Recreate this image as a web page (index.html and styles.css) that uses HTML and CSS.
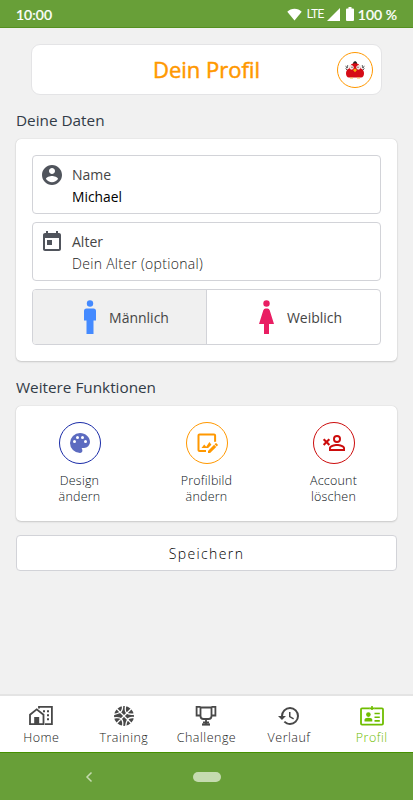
FILE: index.html
```
<!DOCTYPE html>
<html lang="de">
<head>
<meta charset="utf-8">
<meta name="viewport" content="width=device-width, initial-scale=1">
<title>Dein Profil</title>
<link rel="stylesheet" href="styles.css">
</head>

<body>
	<div class="statusbar">
		<span class="time">10:00</span>
		<div class="status">
			<svg class="wifi" width="15" height="13" viewBox="0 0 16 13"><path d="M8 13L.3 3.600C2.400 1.500 5 .4 8 .4s5.600 1.100 7.700 3.200z"/></svg>
			<span class="lte">LTE</span>
			<svg class="signal" width="13" height="13" viewBox="0 0 13 13"><path d="M13 0v13H0z"/></svg>
			<svg class="battery" width="8" height="14" viewBox="0 0 8 14"><path d="M2.500 0h3v1.500H7a1 1 0 0 1 1 1V13a1 1 0 0 1-1 1H1a1 1 0 0 1-1-1V2.500a1 1 0 0 1 1-1h1.500z"/></svg>
			<span class="percent">100 %</span>
		</div>
	</div>

	<main>
		<header class="header">
			<h1>Dein Profil</h1>
			<a class="avatar" href="#">
				<svg width="20" height="20" viewBox="0 0 20 20">
					<path d="M7.800 4L8.500 2l1.700-.9L11.800 2.200l.4 1.800z" fill="#222"/>
					<path d="M1.800 8.300L.8 5.800M2.500 8L2.700 5M17.500 8l-.2-3M18.200 8.300l1-2.500" stroke="#444" stroke-width=".8"/>
					<path d="M.8 8.500l2 2.200M19.200 8.500l-2 2.200" stroke="#333" stroke-width="1"/>
					<path d="M6.300 4.300Q10 2 13.700 4.300L16 8.500q3 1.500 3 4.800 0 4-3 4.300H4q-3-.3-3-4.300 0-3.300 3-4.800z" fill="#d50b16"/>
					<path d="M4.200 5.700q2.800-2 4.700 1.200-.2 2.600-2.300 2.800-2.700-.6-2.400-4zM15.800 5.700q-2.800-2-4.700 1.200.2 2.600 2.300 2.800 2.700-.6 2.400-4z" fill="#f4e8e4"/>
					<path d="M6.500 6.700h1v1h-1zM12.500 6.700h1v1h-1z" fill="#222"/>
					<path d="M8 10l2-1.400 2 1.400-2 2.200z" fill="#f6a80c"/>
					<path d="M5 17.600h3v1H5zM12 17.600h3v1h-3z" fill="#f6b64a"/>
				</svg>
			</a>
		</header>

		<h2>Deine Daten</h2>
		<div class="card daten">
			<div class="field">
				<svg width="24" height="24" viewBox="0 0 24 24"><path d="M12 2C6.480 2 2 6.480 2 12s4.480 10 10 10 10-4.480 10-10S17.520 2 12 2zm0 3c1.660 0 3 1.340 3 3s-1.340 3-3 3-3-1.340-3-3 1.340-3 3-3zm0 14.200c-2.500 0-4.710-1.280-6-3.220.03-1.990 4-3.080 6-3.080 1.990 0 5.970 1.090 6 3.080-1.290 1.940-3.500 3.220-6 3.220z"/></svg>
				<div>
					<label>Name</label>
					<p class="value">Michael</p>
				</div>
			</div>
			<div class="field">
				<svg width="24" height="24" viewBox="0 0 24 24"><path d="M19 3h-1V1h-2v2H8V1H6v2H5c-1.110 0-1.990.9-1.990 2L3 19c0 1.100.89 2 2 2h14c1.100 0 2-.9 2-2V5c0-1.100-.9-2-2-2zm0 16H5V8h14v11zM7 10h5v5H7z"/></svg>
				<div>
					<label>Alter</label>
					<p class="value leer">Dein Alter (optional)</p>
				</div>
			</div>
			<div class="geschlecht">
				<div class="option aktiv">
					<svg class="mann" width="12" height="34" viewBox="0 0 12 34"><circle cx="6" cy="3.500" r="3.200"/><path d="M2.500 8.500h7A2.500 2.500 0 0 1 12 11v9.500H9.500V34h-7V20.500H0V11a2.500 2.500 0 0 1 2.500-2.500z"/></svg>
					<span>Männlich</span>
				</div>
				<div class="option">
					<svg class="frau" width="15" height="34" viewBox="0 0 15 34"><circle cx="7.500" cy="3.500" r="3.200"/><path d="M6.500 8.500h2q1.500 0 2.200 1.700L15 24h-5v10H5V24H0l4.300-13.800Q5 8.500 6.500 8.500z"/></svg>
					<span>Weiblich</span>
				</div>
			</div>
		</div>

		<h2>Weitere Funktionen</h2>
		<div class="card funktionen">
			<a class="funktion" href="#">
				<span class="kreis blau"><svg width="24" height="24" viewBox="0 0 24 24"><path d="M12 22A10 10 0 0 1 2 12 10 10 0 0 1 12 2c5.500 0 10 4 10 9a6 6 0 0 1-6 6h-1.800c-.3 0-.5.2-.5.500 0 .1.100.2.100.3.400.500.600 1.100.600 1.700.100 1.400-1 2.500-2.400 2.500zM6.500 9A1.500 1.500 0 0 0 5 10.500 1.500 1.500 0 0 0 6.500 12 1.500 1.500 0 0 0 8 10.500 1.500 1.500 0 0 0 6.500 9zm3-4A1.500 1.500 0 0 0 8 6.500 1.500 1.500 0 0 0 9.500 8 1.500 1.500 0 0 0 11 6.500 1.500 1.500 0 0 0 9.500 5zm5 0A1.500 1.500 0 0 0 13 6.500 1.500 1.500 0 0 0 14.500 8 1.500 1.500 0 0 0 16 6.500 1.500 1.500 0 0 0 14.500 5zm3 4a1.500 1.500 0 0 0-1.500 1.500 1.500 1.500 0 0 0 1.500 1.500 1.500 1.500 0 0 0 1.500-1.500A1.500 1.500 0 0 0 17.500 9z"/></svg></span>
				<span>Design<br>ändern</span>
			</a>
			<a class="funktion" href="#">
				<span class="kreis orange"><svg width="24" height="24" viewBox="0 0 24 24"><path d="M22.700 14.400l-1 1-2.100-2.100 1-1c.2-.2.600-.2.800 0l1.300 1.300c.2.2.2.600 0 .8M13 19.900V22h2.100l6.100-6.100-2.100-2.100-6.100 6.100M11.200 15.800l-2-2.400-2.700 3.600h6.600l3.300-3.300-2-2.600-3.200 4.700M11 19.900v-.8H4.500V4.500h14.600v6.600c.6-.3 1.300-.5 2-.3V4.500c0-1.100-.9-2-2-2H4.500c-1.100 0-2 .9-2 2v14.600c0 1.100.9 2 2 2H11z"/></svg></span>
				<span>Profilbild<br>ändern</span>
			</a>
			<a class="funktion" href="#">
				<span class="kreis rot"><svg width="24" height="24" viewBox="0 0 24 24"><path d="M15 4a4 4 0 0 0-4 4 4 4 0 0 0 4 4 4 4 0 0 0 4-4 4 4 0 0 0-4-4m0 1.900A2.100 2.100 0 1 1 12.900 8 2.100 2.100 0 0 1 15 5.900M15 13c-2.670 0-8 1.330-8 4v3h16v-3c0-2.670-5.330-4-8-4m0 1.900c2.970 0 6.100 1.460 6.100 2.100v1.100H8.900V17c0-.64 3.100-2.100 6.100-2.100M4.500 9.600L2.400 7.500.9 9 3 11.100.9 13.200l1.500 1.500 2.100-2.100 2.100 2.100 1.500-1.500L6 11.100 8.100 9 6.600 7.500z"/></svg></span>
				<span>Account<br>löschen</span>
			</a>
		</div>

		<button class="speichern" type="button">Speichern</button>
	</main>

	<nav class="tabs">
		<a href="#">
			<svg width="26" height="24" viewBox="0 0 26 24"><g fill="none" stroke="currentColor" stroke-width="1.800"><path d="M2 20.200v-9.500l6.700-5.400 6.800 5.400v9.500H2z"/><path d="M11 4.500V2.900h12.900v17.300h-7"/></g><path d="M6.200 13h5v7.500h-5zM15 6.200h2v2h-2zM19 6.200h2v2h-2zM19 10.200h2v2h-2zM19 14.200h2v2h-2z"/></svg>
			<span>Home</span>
		</a>
		<a href="#">
			<svg width="24" height="24" viewBox="0 0 24 24"><circle cx="12" cy="12" r="10"/><g fill="none" stroke="#fff" stroke-width="1.300"><path d="M4.500 4.500l15 15M19.500 4.500l-15 15M10.500 1.500q.5 5.500-2.700 7T1.500 10.500M1.500 14q6-1 8 1.200T10.500 22.500M22.500 10q-6 .8-8-1.200T13.700 1.500M22.500 13.700q-5.500-.8-7 2T13.700 22.500"/></g></svg>
			<span>Training</span>
		</a>
		<a href="#">
			<svg width="24" height="24" viewBox="0 0 24 24"><g fill="none" stroke="currentColor" stroke-width="1.800"><path d="M6.500 3.500h11V12q0 3-3 3h-5q-3 0-3-3z"/><path d="M6.500 11.500H2.600V2.900h3.900M17.500 11.500h3.900V2.900h-3.900M12 15v5M9 18.500h6"/><path d="M8 20.500h8" stroke-width="2.200"/></g></svg>
			<span>Challenge</span>
		</a>
		<a href="#">
			<svg width="24" height="24" viewBox="0 0 24 24"><path d="M13.500 8H12v5l4.280 2.540.72-1.210-3.500-2.080V8M13 3a9 9 0 0 0-9 9H1l3.960 4.030L9 12H6a7 7 0 0 1 7-7 7 7 0 0 1 7 7 7 7 0 0 1-7 7c-1.930 0-3.680-.79-4.940-2.060l-1.420 1.420A8.900 8.900 0 0 0 13 21a9 9 0 0 0 9-9 9 9 0 0 0-9-9"/></svg>
			<span>Verlauf</span>
		</a>
		<a class="aktiv" href="#">
			<svg width="26" height="24" viewBox="0 0 26 24"><g fill="none" stroke="currentColor" stroke-width="1.800"><path d="M10.500 4.400H3q-1 0-1 1v14.200q0 1 1 1h20q1 0 1-1V5.400q0-1-1-1h-7.500"/><path d="M13 2v4M10.300 4.400h5.400M15.500 9.500h5.300M15.500 13.200h5.300M15.500 16.900h5.300" stroke-width="1.600"/></g><circle cx="9.400" cy="10.600" r="2.300"/><path d="M5.500 17.400v-1.600q0-2 3.900-2t3.900 2v1.600z"/></svg>
			<span>Profil</span>
		</a>
	</nav>

	<div class="systembar">
		<svg class="zurueck" width="8" height="12" viewBox="0 0 8 12"><path d="M6.500 1.500L2 6l4.500 4.500"/></svg>
		<span class="pille"></span>
	</div>
</body>
</html>
```
FILE: styles.css
```
*{
	box-sizing:border-box;
}

body,h1,h2,p{
	margin:0;
	padding:0;
}

body{
	height:800px;
	display:flex;
	flex-direction:column;
	background:#f1f1f1;
	color:#323b47;
	font-family:"Open Sans",sans-serif;
	font-size:14px;
	overflow:hidden;
}

svg{
	display:block;
	flex:none;
	fill:currentColor;
}

a{
	color:inherit;
	text-decoration:none;
}

/* Statusleiste */
.statusbar{
	height:28px;
	padding:1px 16px 0;
	display:flex;
	justify-content:space-between;
	align-items:center;
	background:#689f38;
	border-bottom:1px solid #559020;
	color:#fff;
	font-family:Lato,sans-serif;
	font-size:14px;
	font-weight:500;
	-webkit-text-stroke:.2px;
}

.status{
	display:flex;
	align-items:center;
}

.lte{
	margin:0 3px 0 5px;
	font-family:Roboto,sans-serif;
	font-size:12px;
	font-weight:400;
	letter-spacing:-.6px;
	-webkit-text-stroke:0;
}

.battery{
	margin:0 4px 0 6px;
}

main{
	flex:1;
	padding:16px 16px 0;
}

.header{
	height:51px;
	margin:0 15px;
	padding:0 8px;
	display:grid;
	grid-template-columns:36px 1fr 36px;
	align-items:center;
	background:#fff;
	border:1px solid #e4e4e6;
	border-radius:9px;
}

.header h1{
	grid-column:2;
	padding-bottom:2px;
	color:#ff9800;
	font-size:22px;
	font-weight:400;
	text-align:center;
	-webkit-text-stroke:.5px;
}

.avatar{
	width:36px;
	height:36px;
	display:flex;
	justify-content:center;
	align-items:center;
	border:1px solid #ff9800;
	border-radius:50%;
}

h2{
	height:44px;
	padding-top:14px;
	font-size:15.300px;
	font-weight:400;
	line-height:22px;
}

.card{
	background:#fff;
	border-radius:5px;
	box-shadow:0 0 1px #bbb,0 1px 2px rgba(0,0,0,.16);
}

.daten{
	height:222px;
	margin-bottom:1px;
	padding:16px;
}

.field{
	height:59px;
	margin-bottom:8px;
	padding:8px 7px;
	display:flex;
	gap:8px;
	border:1px solid #d2d3d8;
	border-radius:4px;
	color:#50545c;
	line-height:22px;
}

.field svg{
	margin-top:-1px;
}

.field label{
	display:block;
	color:#454545;
}

.field .value{
	color:#000;
	font-size:13.800px;
}

.field .leer{
	color:#222;
	font-size:14px;
	font-weight:300;
	letter-spacing:.3px;
}

.geschlecht{
	height:56px;
	display:flex;
	border:1px solid #d2d3d8;
	border-radius:4px;
	overflow:hidden;
	color:#454545;
}

.option{
	flex:1;
	padding-left:14px;
	display:flex;
	justify-content:center;
	align-items:center;
	gap:13px;
}

.option + .option{
	border-left:1px solid #d2d3d8;
}

.option.aktiv{
	background:#f0f0f0;
}

.mann{
	color:#448aff;
}

.frau{
	color:#e91e63;
}

.funktionen{
	height:115px;
	padding-top:16px;
	display:grid;
	grid-template-columns:repeat(3,1fr);
}

.funktion{
	display:flex;
	flex-direction:column;
	align-items:center;
	gap:9px;
	font-size:12.500px;
	font-weight:300;
	line-height:16px;
	letter-spacing:.2px;
	text-align:center;
	color:#0c1420;
}

.kreis{
	width:42px;
	height:42px;
	display:flex;
	justify-content:center;
	align-items:center;
	border:1px solid;
	border-radius:50%;
}

.blau{
	border-color:#1a2ca8;
	color:#5c6bc0;
}

.orange{
	color:#ff9800;
}

.rot{
	color:#cc0c0c;
}

.speichern{
	width:100%;
	height:36px;
	margin-top:14px;
	background:#fff;
	border:1px solid #d2d3d8;
	border-radius:4px;
	color:#000;
	font-family:inherit;
	font-size:14px;
	font-weight:300;
	letter-spacing:1.400px;
}

/* Navigation unten */
.tabs{
	height:58px;
	padding-top:8px;
	display:grid;
	grid-template-columns:repeat(5,1fr);
	background:#fff;
	border-top:2px solid #e4e4e4;
	color:#484848;
	font-size:12.500px;
	font-weight:300;
	letter-spacing:.5px;
}

.tabs a{
	display:flex;
	flex-direction:column;
	align-items:center;
	line-height:20px;
}

.tabs span{
	color:#222;
}

.tabs .aktiv,
.tabs .aktiv span{
	color:#6fbd00;
}

.systembar{
	height:48px;
	display:grid;
	grid-template-columns:178px 57px 178px;
	align-items:center;
	justify-items:center;
	background:#689f38;
	border-top:1px solid #459000;
}

.zurueck{
	fill:none;
	stroke:#c5dbb0;
	stroke-width:1.500;
}

.pille{
	width:28px;
	height:10px;
	border-radius:5px;
	background:#c5dbb0;
}
```
